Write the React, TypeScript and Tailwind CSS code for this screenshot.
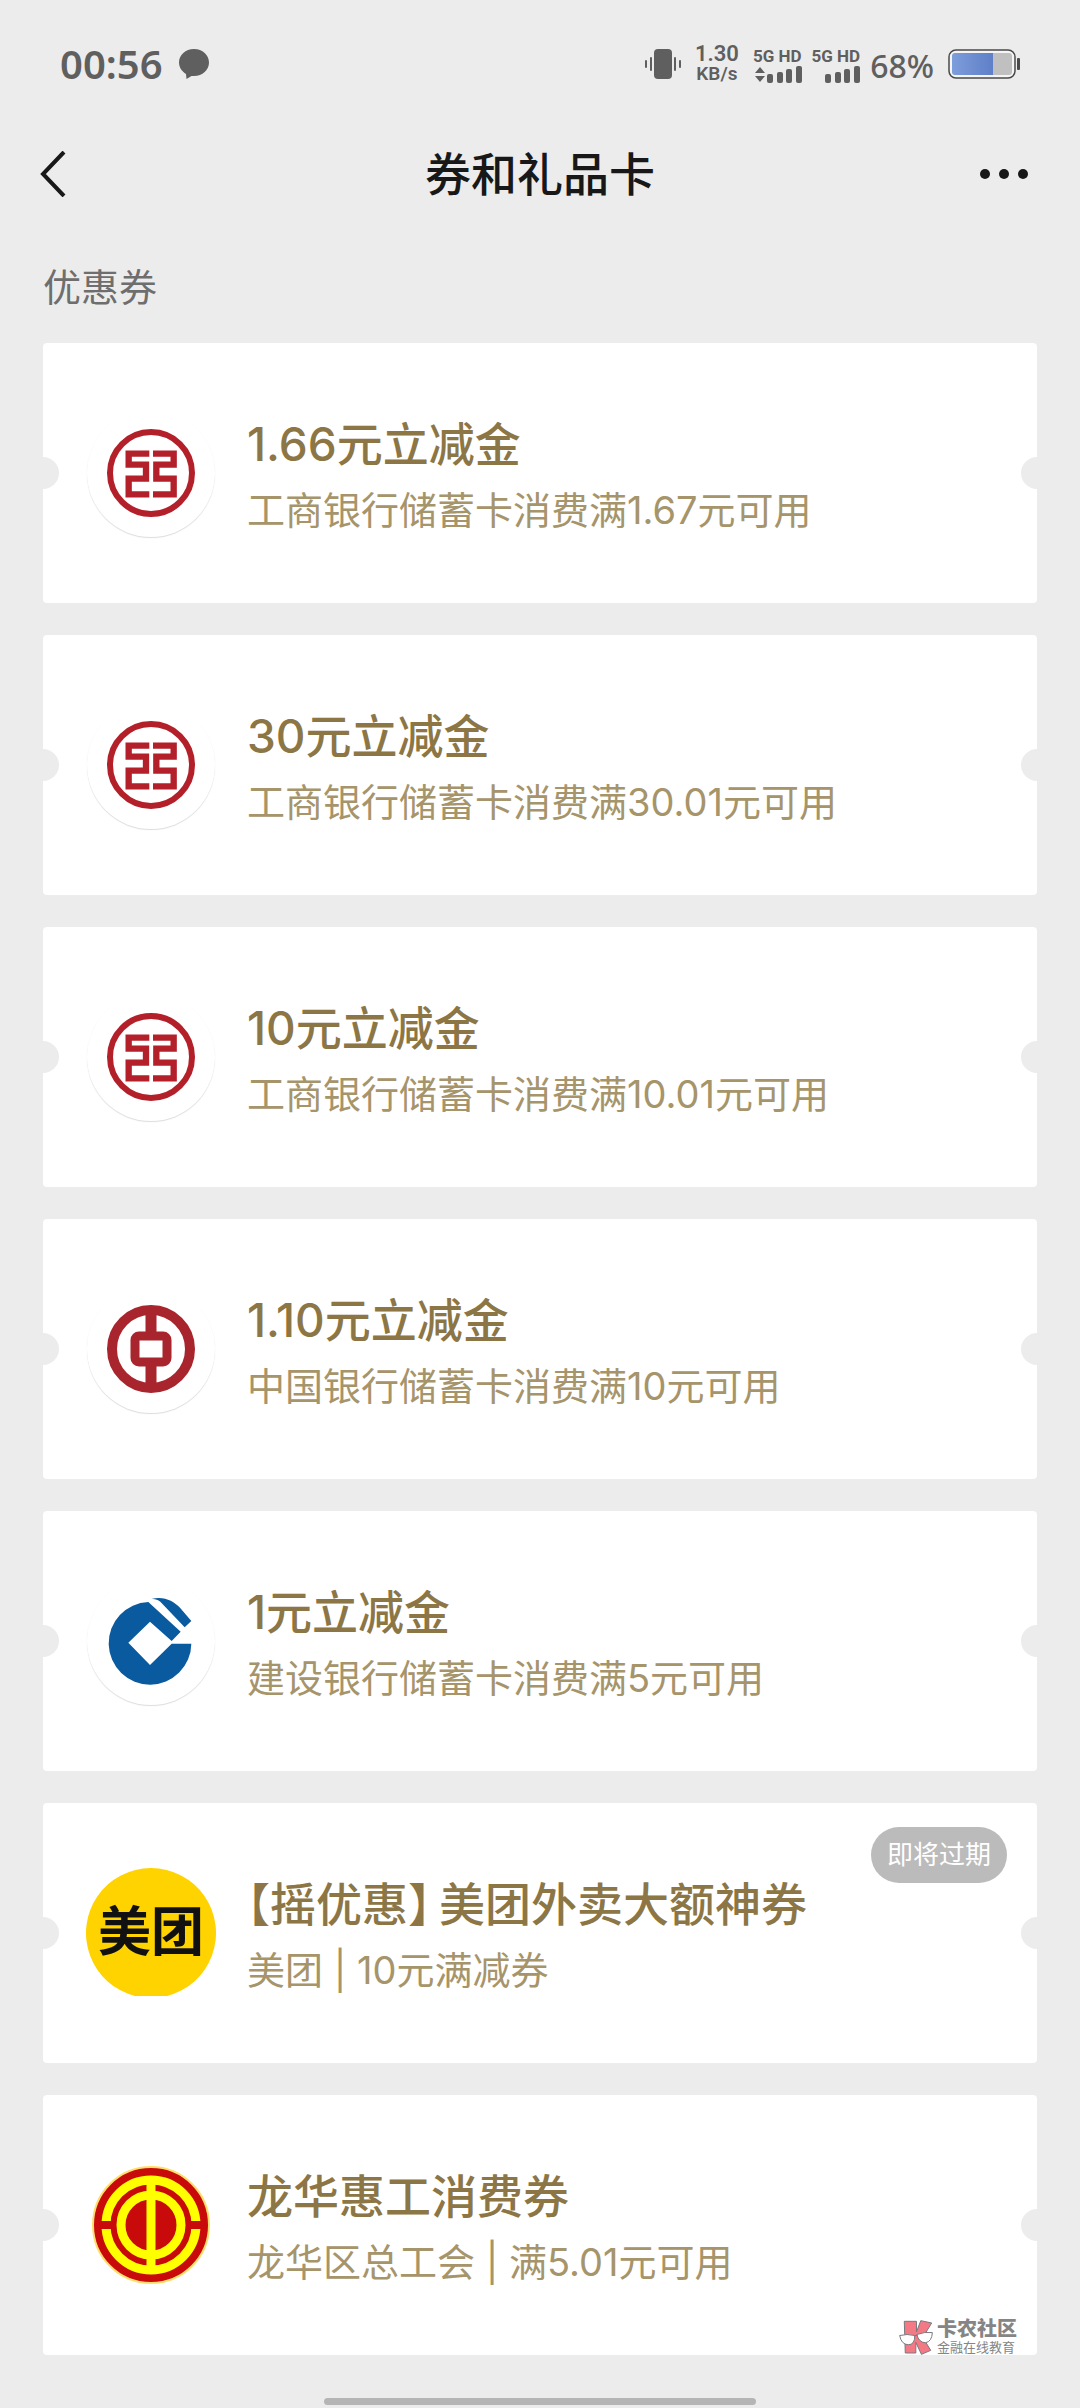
import React from 'react';

type LogoName = 'icbc' | 'boc' | 'ccb' | 'meituan' | 'union';

interface Coupon {
    title: string;
    description: string;
    logo: LogoName;
    expiring?: boolean;
}

const coupons: Coupon[] = [
    { title: '1.66元立减金', description: '工商银行储蓄卡消费满1.67元可用', logo: 'icbc' },
    { title: '30元立减金', description: '工商银行储蓄卡消费满30.01元可用', logo: 'icbc' },
    { title: '10元立减金', description: '工商银行储蓄卡消费满10.01元可用', logo: 'icbc' },
    { title: '1.10元立减金', description: '中国银行储蓄卡消费满10元可用', logo: 'boc' },
    { title: '1元立减金', description: '建设银行储蓄卡消费满5元可用', logo: 'ccb' },
    { title: '【摇优惠】\u2009美团外卖大额神券', description: '美团 | 10元满减券', logo: 'meituan', expiring: true },
    { title: '龙华惠工消费券', description: '龙华区总工会 | 满5.01元可用', logo: 'union' },
];

const IcbcLogo: React.FC = () => (
    <svg viewBox="0 0 282 282" className="w-[94px] h-[94px]" fill="none" stroke="#b3202a">
        <circle cx="141" cy="141" r="123" strokeWidth="18" />
        <path d="M136 83H74V116H126V158H74V205H136" strokeWidth="19" />
        <path d="M147 83H209V116H157V158H209V205H147" strokeWidth="19" />
    </svg>
);

const BocLogo: React.FC = () => (
    <svg viewBox="-48 -48 96 96" className="w-24 h-24" fill="none" stroke="#a9252d">
        <circle r="39" strokeWidth="10" />
        <path d="M0 -40V-13M0 13V40" strokeWidth="11" />
        <rect x="-16" y="-13" width="32" height="26" rx="4" strokeWidth="9" />
    </svg>
);

const CcbLogo: React.FC = () => (
    <svg viewBox="69 96 288 288" className="w-24 h-24" fill="#0a5a9f">
        <path d="M334 248A124 124 0 1 1 205 123L302 212L275 240L210 182L145 245L210 312L275 248Z" />
        <path d="M214 114C250 104 280 119 300 140L334 180L314 199L241 122C233 115 224 113 214 114Z" />
    </svg>
);

const MeituanLogo: React.FC = () => (
    <svg viewBox="0 0 130 130" className="w-[130px] h-[130px]">
        <path d="M49 128A65 65 0 1 1 81 128Z" fill="#ffd300" />
        <text
            x="65"
            y="83"
            textAnchor="middle"
            fontSize="53"
            fontWeight="700"
            fill="#111"
            fontFamily="'Noto Sans CJK SC', sans-serif"
        >
            美团
        </text>
    </svg>
);

const UnionLogo: React.FC = () => (
    <svg viewBox="-60 -60 120 120" className="w-[120px] h-[120px]" fill="none">
        <circle r="58" fill="#c80a0a" stroke="#ffdf6b" strokeWidth="2" />
        <circle r="45" stroke="#ff0" strokeWidth="9" />
        <path d="M-52 0H-38M38 0H52" stroke="#c80a0a" strokeWidth="8" />
        <circle r="30" stroke="#ff0" strokeWidth="9" />
        <path d="M0 -48V48" stroke="#ff0" strokeWidth="9" />
    </svg>
);

const CouponLogo: React.FC<{ name: LogoName }> = ({ name }) => {
    if (name === 'meituan') return <MeituanLogo />;
    if (name === 'union') return <UnionLogo />;
    return (
        <div className="flex items-center justify-center w-32 h-32 rounded-full bg-white shadow-[0_1px_1px_rgba(0,0,0,0.14)]">
            {name === 'icbc' && <IcbcLogo />}
            {name === 'boc' && <BocLogo />}
            {name === 'ccb' && <CcbLogo />}
        </div>
    );
};

const CouponCard: React.FC<{ coupon: Coupon; children?: React.ReactNode }> = ({ coupon, children }) => (
    <li className="relative flex items-center h-[260px] pl-10 pr-8 rounded-sm bg-white">
        <span className="absolute -left-4 top-1/2 -translate-y-1/2 w-8 h-8 rounded-full bg-[#ececec]" />
        <span className="absolute -right-4 top-1/2 -translate-y-1/2 w-8 h-8 rounded-full bg-[#ececec]" />
        <div className="flex items-center justify-center shrink-0 w-[136px]">
            <CouponLogo name={coupon.logo} />
        </div>
        <div className="ml-7 pt-1.5 min-w-0">
            <h2 className="text-[46px] leading-[68px] font-medium text-[#8c7645] [font-feature-settings:'halt']">
                {coupon.title}
            </h2>
            <p className="text-[38px] leading-[64px] text-[#a6946a]">{coupon.description}</p>
        </div>
        {coupon.expiring && (
            <span className="absolute right-[30px] top-6 h-14 px-4 rounded-full bg-[#bbb] text-[26px] leading-[56px] text-white">
                即将过期
            </span>
        )}
        {children}
    </li>
);

const SignalBars: React.FC<{ active?: boolean }> = ({ active }) => (
    <div className="flex flex-col items-end">
        <span className="text-[17px] leading-5 font-bold whitespace-pre">5G HD</span>
        <svg viewBox="0 0 47 17" className="w-[47px] h-[17px]" fill="currentColor">
            {active && <path d="M5 1L10 7H0ZM5 16L10 10H0Z" />}
            <rect x="12" y="8" width="6" height="9" rx="2" />
            <rect x="22" y="6" width="6" height="11" rx="2" />
            <rect x="31" y="3" width="6" height="14" rx="2" />
            <rect x="41" y="0" width="6" height="17" rx="2" />
        </svg>
    </div>
);

const StatusBar: React.FC = () => (
    <div className="flex items-center justify-between h-32 px-[60px] text-[#5f5f5f] font-['Noto_Sans','Noto_Sans_CJK_SC',sans-serif]">
        <div className="flex items-center gap-4">
            <span className="text-[40px] leading-10 font-semibold">00:56</span>
            <svg viewBox="0 0 30 30" className="w-[30px] h-[30px]" fill="currentColor">
                <path d="M15 0C6.500 0 0 6 0 13.500C0 18.500 3 22.500 7 25L7.500 30L12.500 27H15C23.500 27 30 21 30 13.500C30 6 23.500 0 15 0Z" />
            </svg>
        </div>
        <div className="flex items-center gap-[10px] font-['Roboto',sans-serif]">
            <svg viewBox="0 0 36 30" className="w-9 h-[30px] mr-1" fill="currentColor">
                <rect x="9" y="0" width="18" height="30" rx="4" />
                <rect x="0" y="11" width="2" height="8" rx="1" />
                <rect x="5" y="8" width="2" height="14" rx="1" />
                <rect x="29" y="8" width="2" height="14" rx="1" />
                <rect x="34" y="11" width="2" height="8" rx="1" />
            </svg>
            <div className="flex flex-col mr-1 text-center font-semibold">
                <span className="text-[22px] leading-5">1.30</span>
                <span className="text-[19px] leading-5">KB/s</span>
            </div>
            <SignalBars active />
            <SignalBars />
            <span className="mr-1 pt-1 text-[32px] leading-10 font-medium font-['Noto_Sans',sans-serif]">68%</span>
            <svg viewBox="0 0 72 30" className="w-[72px] h-[30px]">
                <defs>
                    <linearGradient id="charge">
                        <stop offset="0" stopColor="#7d9ddb" />
                        <stop offset="1" stopColor="#5f7fc8" />
                    </linearGradient>
                </defs>
                <rect x="1" y="1" width="66" height="28" rx="7" fill="#f5f5f5" stroke="#4a4a4a" strokeWidth="1.500" />
                <path d="M45 4H61Q64 4 64 7V23Q64 26 61 26H45Z" fill="#c0c0c0" />
                <path d="M45 4H7Q4 4 4 7V23Q4 26 7 26H45Z" fill="url(#charge)" />
                <rect x="69" y="9" width="3" height="12" rx="1" fill="#4a4a4a" />
            </svg>
        </div>
    </div>
);

const NavBar: React.FC = () => (
    <header className="flex items-center justify-between h-[92px] px-10 text-[#181818]">
        <button type="button" aria-label="返回" className="flex flex-1">
            <svg viewBox="0 0 26 46" className="w-[26px] h-[46px]" fill="none" stroke="currentColor" strokeWidth="4">
                <path d="M24 1L3 23L24 45" />
            </svg>
        </button>
        <h1 className="text-[46px] leading-[68px] font-medium">券和礼品卡</h1>
        <button type="button" aria-label="更多" className="flex flex-1 justify-end">
            <svg viewBox="0 0 48 10" className="w-12 h-[10px] mr-3" fill="currentColor">
                <circle cx="5" cy="5" r="5" />
                <circle cx="24" cy="5" r="5" />
                <circle cx="43" cy="5" r="5" />
            </svg>
        </button>
    </header>
);

const CommunityMark: React.FC = () => (
    <div className="absolute right-5 bottom-0 flex items-center gap-1 text-[#858585]">
        <svg viewBox="120 92 103 106" className="w-[34px] h-[35px]" stroke="#77777d" strokeWidth="3">
            <path d="M136 96H173V128L186 94L219 101L192 145L216 184L188 196L171 160V192H139Z" fill="#f37a85" />
            <path d="M122 139Q144 133 168 139Q168 167 148 167Q127 166 122 139Z" fill="#fff" />
            <path d="M174 136Q198 127 221 130Q220 157 200 161Q180 160 174 136Z" fill="#fff" />
            <path d="M166 142Q171 136 176 139" fill="none" />
        </svg>
        <div className="flex flex-col">
            <span className="text-xl leading-5 font-black">卡农社区</span>
            <span className="text-[13px] leading-4">金融在线教育</span>
        </div>
    </div>
);

const App: React.FC = () => {
    return (
        <div className="flex flex-col min-h-screen bg-[#ececec] font-['Inter','Noto_Sans_CJK_SC',sans-serif]">
            <StatusBar />
            <NavBar />
            <main className="px-[43px]">
                <p className="pt-[38px] pb-[26px] text-[38px] leading-[59px] text-[#6e6e6e]">优惠券</p>
                <ul className="flex flex-col gap-8">
                    {coupons.map((coupon, index) => (
                        <CouponCard key={index} coupon={coupon}>
                            {index === coupons.length - 1 && <CommunityMark />}
                        </CouponCard>
                    ))}
                </ul>
            </main>
            <div className="w-2/5 h-[7px] mt-auto mb-[3px] mx-auto rounded-full bg-[#b5b5b5]" />
        </div>
    );
};

export default App;
